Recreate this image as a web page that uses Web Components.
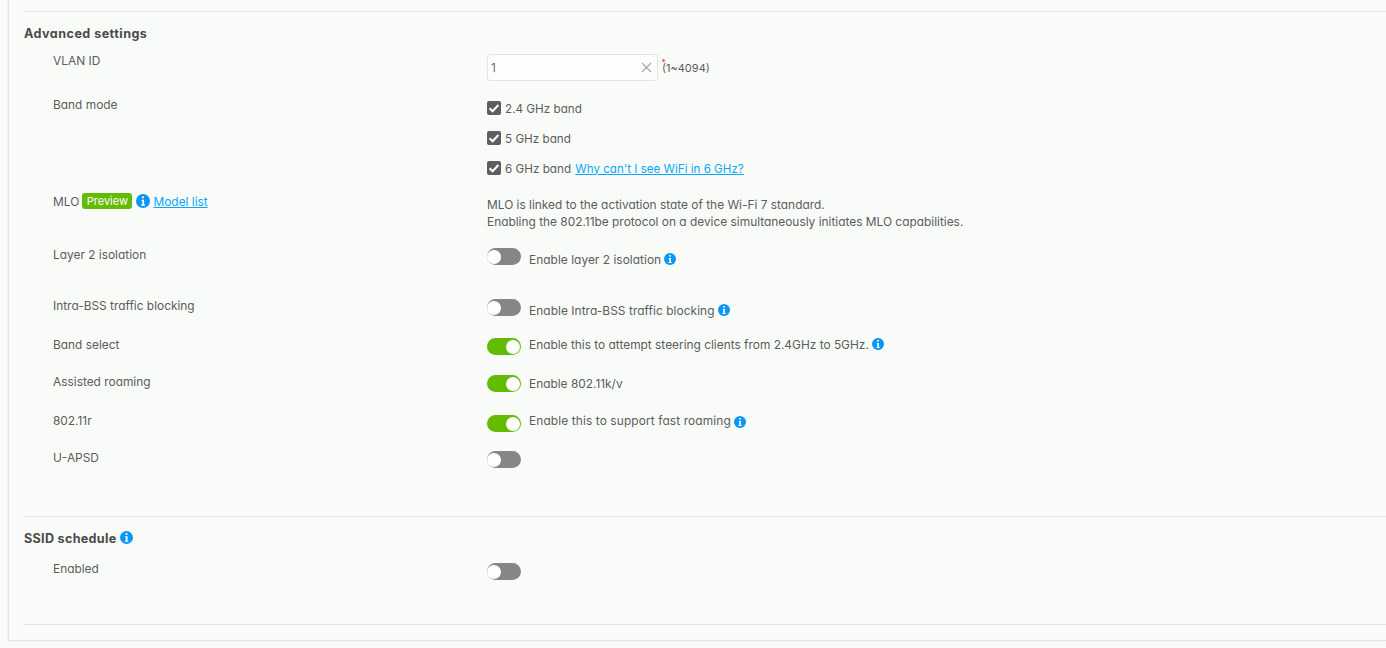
<!DOCTYPE html>
<html>
<head>
<meta charset="utf-8">
<title>Advanced settings</title>
<style>
    html, body{ margin: 0; height: 100%; overflow: hidden; background: #f9fbf9; }
    body{ font-family: "Inter", "Liberation Sans", sans-serif; font-size: 11.9px; color: #5c5c5c; font-feature-settings: "cv11" 1; }
    a{ color: #0aa8f7; }
    .down{ padding-top: 5px; }
    .up{ padding-bottom: 5px; }
</style>
</head>
<body>
<template id="info-tpl">
    <style>
        :host{ display: block; width: var(--size, 12px); height: var(--size, 12px); flex: none; margin-left: -5px; }
        svg{ width: 100%; height: 100%; display: block; }
    </style>
    <svg viewBox="0 0 14 14"><circle cx="7" cy="7" r="7" fill="#0a96f5"/><rect x="6" y="2.2" width="2.1" height="2.1" rx=".8" fill="#fff"/><path d="M5.5 5.7h2.6v4.9h.9v1.1H5.2v-1.1h1V6.8h-.7z" fill="#fff"/></svg>
</template>

<template id="toggle-tpl">
    <style>
        :host{ display: block; width: 34px; height: 17px; border-radius: 9px; background: #868686; position: relative; flex: none; }
        :host([on]){ background: #64bb04; }
        i{ position: absolute; top: 1.5px; left: 0; width: 14px; height: 14px; border-radius: 50%; background: #fff; }
        :host([on]) i{ left: 19px; }
    </style>
    <i></i>
</template>

<template id="check-tpl">
    <style>
        :host{ display: flex; align-items: center; gap: 4px; height: 16px; font-size: 11.7px; }
        .box{ width: 14px; height: 14px; border-radius: 2px; background: #5e5e5e; flex: none; }
        svg{ display: block; width: 14px; height: 14px; }
        slot{ display: block; padding-top: 1px; }
    </style>
    <div class="box"><svg viewBox="0 0 14 14"><path d="M2.6 7.2l3 3 5.8-6.2" fill="none" stroke="#fff" stroke-width="2"/></svg></div>
    <slot></slot>
</template>

<template id="row-tpl">
    <style>
        :host{ display: grid; grid-template-columns: 434px 1fr; padding-left: 29px; height: var(--h, auto); }
        .label{ display: flex; align-items: center; height: 14px; white-space: nowrap; }
        .ctl{ white-space: nowrap; padding-top: var(--ctl-top, 1px); }
    </style>
    <div class="label"><slot name="label"></slot></div>
    <div class="ctl"><slot></slot></div>
</template>

<template id="switch-tpl">
    <style>
        :host{ display: flex; align-items: center; gap: 8px; height: 17px; }
    </style>
    <slot></slot>
</template>

<template id="section-tpl">
    <style>
        :host{ display: block; border-top: 1px solid #e3e5e3; box-sizing: border-box; height: var(--h, auto); padding-top: 14px; }
        h3{ margin: 0 0 var(--gap, 11px); font-size: 12.6px; letter-spacing: .45px; font-weight: 700; color: #4a4a4a; line-height: 16px; display: flex; align-items: center; gap: 4px; }
    </style>
    <h3><slot name="title"></slot></h3>
    <slot></slot>
</template>

<template id="input-tpl">
    <style>
        :host{ display: flex; align-items: center; box-sizing: border-box; width: 171px; height: 27px; padding: 0 5px 0 3px; background: #fcfdfc; border: 1px solid #e3e5e3; border-radius: 3px; justify-content: space-between; flex: none; color: #6e6e6e; }
        svg{ width: 11px; height: 11px; display: block; }
    </style>
    <slot></slot>
    <svg viewBox="0 0 11 11"><path d="M1 1l9 9M10 1l-9 9" stroke="#a5a5a5" stroke-width="1.1" fill="none"/></svg>
</template>

<template id="card-tpl">
    <style>
        :host{ display: block; box-sizing: border-box; height: 641px; margin-left: 8px; padding: 11px 0 0 15px; background: #f9fbf9; border-left: 1px solid #e2e4e2; border-bottom: 1px solid #e2e4e2; box-shadow: 0 0 2px rgba(0,0,0,.08); }
    </style>
    <slot></slot>
</template>

<script>
// every element just stamps its template into an open shadow root
function register(name, tplId){
    customElements.define(name, class extends HTMLElement{
        constructor(){
            super();
            this.attachShadow({mode: 'open'});
            this.shadowRoot.appendChild(document.getElementById(tplId).content.cloneNode(true));
        }
    });
}
register('zy-info', 'info-tpl');
register('zy-toggle', 'toggle-tpl');
register('zy-check', 'check-tpl');
register('zy-row', 'row-tpl');
register('zy-switch', 'switch-tpl');
register('zy-section', 'section-tpl');
register('zy-input', 'input-tpl');
register('zy-card', 'card-tpl');
</script>

<zy-card>
    <zy-section style="--h:505px">
        <span slot="title">Advanced settings</span>

        <zy-row style="--h:44px;--ctl-top:1px">
            <span slot="label">VLAN ID</span>
            <div style="display:flex;align-items:center;gap:4px">
                <zy-input>1</zy-input>
                <span style="position:relative;font-size:11px">(1~4094)<i style="position:absolute;left:0;top:-2px;width:3px;height:3px;border-radius:50%;background:#ea6a72"></i></span>
            </div>
        </zy-row>

        <zy-row style="--h:97px;--ctl-top:3px">
            <span slot="label">Band mode</span>
            <div style="display:flex;flex-direction:column;gap:14px">
                <zy-check>2.4 GHz band</zy-check>
                <zy-check>5 GHz band</zy-check>
                <zy-check>6 GHz band <a href="#" style="font-size:11.6px;margin-left:1px">Why can't I see WiFi in 6 GHz?</a></zy-check>
            </div>
        </zy-row>

        <zy-row style="--h:53px;--ctl-top:2px">
            <span slot="label" style="display:flex;align-items:center;gap:3px">MLO
                <span style="background:#64bb04;color:#fff;border-radius:3px;padding:0 4.5px;line-height:16px;font-size:11px">Preview</span>
                <zy-info style="--size:14px;margin-left:1px"></zy-info>
                <a href="#">Model list</a></span>
            <div style="line-height:17px">MLO is linked to the activation state of the Wi-Fi 7 standard.<br>Enabling the 802.11be protocol on a device simultaneously initiates MLO capabilities.</div>
        </zy-row>

        <zy-row style="--h:51px">
            <span slot="label">Layer 2 isolation</span>
            <zy-switch><zy-toggle></zy-toggle><span class="down" style="letter-spacing:.04px">Enable layer 2 isolation</span><zy-info style="margin-top:5px"></zy-info></zy-switch>
        </zy-row>

        <zy-row style="--h:39px">
            <span slot="label">Intra-BSS traffic blocking</span>
            <zy-switch><zy-toggle></zy-toggle><span class="down" style="letter-spacing:.06px">Enable Intra-BSS traffic blocking</span><zy-info style="margin-top:5px"></zy-info></zy-switch>
        </zy-row>

        <zy-row style="--h:37px">
            <span slot="label">Band select</span>
            <zy-switch><zy-toggle on></zy-toggle><span class="up">Enable this to attempt steering clients from 2.4GHz to 5GHz.</span><zy-info style="margin-bottom:5px"></zy-info></zy-switch>
        </zy-row>

        <zy-row style="--h:39px">
            <span slot="label">Assisted roaming</span>
            <zy-switch><zy-toggle on></zy-toggle><span>Enable 802.11k/v</span></zy-switch>
        </zy-row>

        <zy-row style="--h:37px;--ctl-top:2px">
            <span slot="label">802.11r</span>
            <zy-switch><zy-toggle on></zy-toggle><span style="padding-bottom:7px;letter-spacing:.12px">Enable this to support fast roaming</span><zy-info style="margin-bottom:4px"></zy-info></zy-switch>
        </zy-row>

        <zy-row style="--h:auto">
            <span slot="label">U-APSD</span>
            <zy-switch><zy-toggle></zy-toggle></zy-switch>
        </zy-row>
    </zy-section>

    <zy-section style="--h:108px;--gap:14px">
        <span slot="title" style="letter-spacing:.3px">SSID schedule</span>
        <zy-info slot="title" style="--size:13px;margin:-3px 0 0 -1px"></zy-info>
        <zy-row style="--h:auto;--ctl-top:2px">
            <span slot="label">Enabled</span>
            <zy-switch><zy-toggle></zy-toggle></zy-switch>
        </zy-row>
    </zy-section>

    <zy-section style="height:1px;padding:0;overflow:hidden"></zy-section>
</zy-card>
</body>
</html>
